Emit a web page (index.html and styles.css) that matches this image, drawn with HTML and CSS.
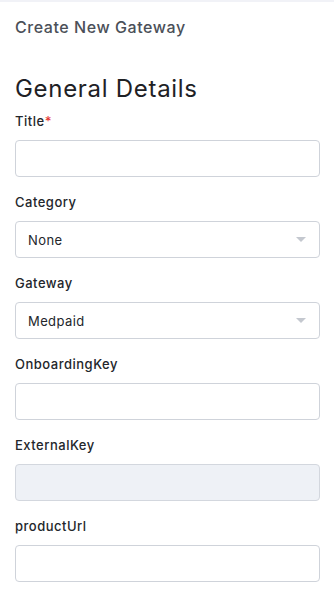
FILE: index.html
```html
<!DOCTYPE html>
<html lang="en">
<head>
  <meta charset="UTF-8" />
  <title>Create New Gateway</title>
  <link rel="stylesheet" href="styles.css">
</head>
<body>

<div class="topbar"></div>

<div class="page">
  <h1 class="page-title">Create New Gateway</h1>

  <form class="gateway-form">
    <h2 class="section-title">General Details</h2>

    <div class="field">
      <label for="title">Title<span class="required">*</span></label>
      <input type="text" id="title">
    </div>

    <div class="field">
      <label for="category">Category</label>
      <div class="select-box">
        <select id="category">
          <option>None</option>
        </select>
        <span class="caret"></span>
      </div>
    </div>

    <div class="field">
      <label for="gateway">Gateway</label>
      <div class="select-box">
        <select id="gateway">
          <option>Medpaid</option>
        </select>
        <span class="caret"></span>
      </div>
    </div>

    <div class="field">
      <label for="onboardingKey">OnboardingKey</label>
      <input type="text" id="onboardingKey">
    </div>

    <div class="field">
      <label for="externalKey">ExternalKey</label>
      <input type="text" id="externalKey" disabled>
    </div>

    <div class="field">
      <label for="productUrl">productUrl</label>
      <input type="text" id="productUrl">
    </div>
  </form>
</div>

</body>
</html>
```

FILE: styles.css
```css
* {
  margin: 0;
  padding: 0;
  box-sizing: border-box;
  font-family: 'Inter', 'Open Sans', sans-serif;
}

body {
  background: #fff;
  overflow: hidden;
}

.topbar {
  height: 2px;
  background: #f1f2f7;
}

.page {
  padding: 0 14px 0 15px;
}

.page-title {
  font-size: 16px;
  font-weight: 500;
  line-height: 24px;
  letter-spacing: 0.55px;
  color: #4b5058;
  margin-top: 13px;
}

.section-title {
  font-size: 24px;
  font-weight: 400;
  line-height: 32px;
  letter-spacing: 0.7px;
  color: #1e2125;
  margin-top: 34px;
  margin-bottom: 7px;
}

.field {
  margin-bottom: 16px;
}

.field label {
  display: block;
  font-size: 13px;
  font-weight: 500;
  line-height: 19px;
  letter-spacing: 0.5px;
  color: #23262b;
  margin-bottom: 9px;
}

.required {
  color: #e53935;
}

.field input,
.field select {
  display: block;
  width: 100%;
  height: 37px;
  padding: 0 12px;
  border: 1px solid #cfd3da;
  border-radius: 4px;
  background: #fff;
  font-size: 13px;
  letter-spacing: 0.4px;
  color: #23262b;
  outline: none;
}

.field input:disabled {
  background: #eef1f6;
  border-color: #d3d7de;
}

.select-box {
  position: relative;
}

.field select {
  appearance: none;
  -webkit-appearance: none;
}

.caret {
  position: absolute;
  right: 14px;
  top: 16px;
  width: 0;
  height: 0;
  border-left: 5px solid transparent;
  border-right: 5px solid transparent;
  border-top: 5px solid #c4c8cf;
  pointer-events: none;
}
```
